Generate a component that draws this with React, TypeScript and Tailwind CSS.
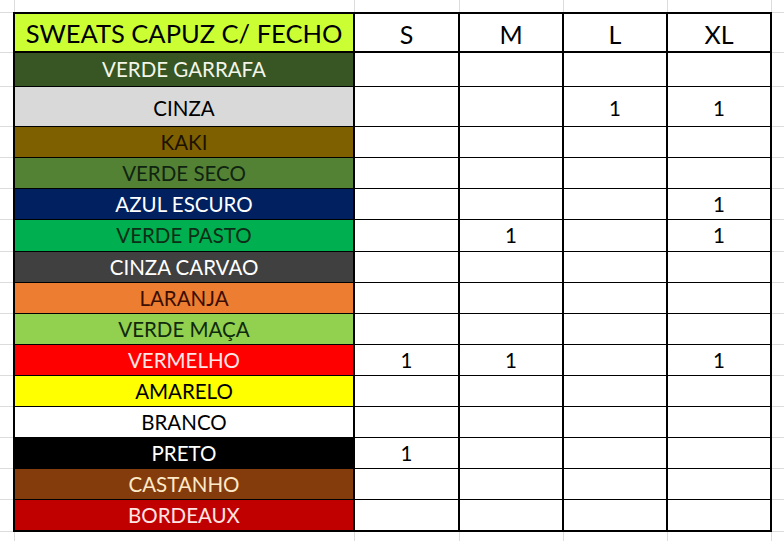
type Row = {
  name: string;
  bg: string;
  fg: string;
  h: string;
  pad?: string;
  last?: boolean;
  sizes: string[];
};

const rows: Row[] = [
  { name: "VERDE GARRAFA", bg: "bg-[#375623]", fg: "text-[#f3f5e8]", h: "h-[34px]", sizes: ["", "", "", ""] },
  { name: "CINZA", bg: "bg-[#d9d9d9]", fg: "text-black", h: "h-[40px]", pad: "pt-[4px]", sizes: ["", "", "1", "1"] },
  { name: "KAKI", bg: "bg-[#7f6000]", fg: "text-[#1c1200]", h: "h-[31px]", sizes: ["", "", "", ""] },
  { name: "VERDE SECO", bg: "bg-[#548235]", fg: "text-[#0f2410]", h: "h-[31px]", sizes: ["", "", "", ""] },
  { name: "AZUL ESCURO", bg: "bg-[#002060]", fg: "text-white", h: "h-[31px]", sizes: ["", "", "", "1"] },
  { name: "VERDE PASTO", bg: "bg-[#00b050]", fg: "text-[#0c2e16]", h: "h-[32px]", sizes: ["", "1", "", "1"] },
  { name: "CINZA CARVAO", bg: "bg-[#404040]", fg: "text-white", h: "h-[31px]", sizes: ["", "", "", ""] },
  { name: "LARANJA", bg: "bg-[#ed7d31]", fg: "text-[#3b0e02]", h: "h-[31px]", sizes: ["", "", "", ""] },
  { name: "VERDE MAÇA", bg: "bg-[#92d050]", fg: "text-[#0f2a0d]", h: "h-[31px]", sizes: ["", "", "", ""] },
  { name: "VERMELHO", bg: "bg-[#ff0000]", fg: "text-[#ffe6e6]", h: "h-[31px]", sizes: ["1", "1", "", "1"] },
  { name: "AMARELO", bg: "bg-[#ffff00]", fg: "text-black", h: "h-[31px]", sizes: ["", "", "", ""] },
  { name: "BRANCO", bg: "bg-white", fg: "text-black", h: "h-[31px]", sizes: ["", "", "", ""] },
  { name: "PRETO", bg: "bg-black", fg: "text-white", h: "h-[31px]", sizes: ["1", "", "", ""] },
  { name: "CASTANHO", bg: "bg-[#843c0c]", fg: "text-[#fde9c8]", h: "h-[31px]", sizes: ["", "", "", ""] },
  { name: "BORDEAUX", bg: "bg-[#c00000]", fg: "text-[#ffe4e4]", h: "h-[32px]", last: true, sizes: ["", "", "", ""] },
];

const sizeWidths = ["w-[105px]", "w-[104px]", "w-[104px]", "w-[104px]"];

// faint excel gridlines above / below the table
const GridStrip = ({ h }: { h: string }) => (
  <div className={`flex ${h}`}>
    <div className="w-[15px] border-r border-[#dcdcdc]" />
    <div className="w-[340px] border-r border-[#dcdcdc]" />
    <div className="w-[105px] border-r border-[#dcdcdc]" />
    <div className="w-[104px] border-r border-[#dcdcdc]" />
    <div className="w-[104px] border-r border-[#dcdcdc]" />
    <div className="w-[104px] border-r border-[#dcdcdc]" />
    <div className="flex-1" />
  </div>
);

const BodyRow = ({ row }: { row: Row }) => {
  const bottom = row.last ? "border-b-2" : "border-b";
  return (
    <div className={`flex ${row.h}`}>
      <div className="w-[13px] border-b border-[#dcdcdc]" />
      <div
        className={`w-[342px] flex items-center justify-center border-l-2 border-r-2 border-black ${bottom} ${row.bg} ${row.fg} ${row.pad ?? ""} text-[20.5px] leading-none`}
      >
        {row.name}
      </div>
      {row.sizes.map((v, i) => (
        <div
          key={i}
          className={`${sizeWidths[i]} flex items-center justify-center border-r-2 border-black ${bottom} ${row.pad ?? ""} text-[20.5px] leading-none text-black`}
        >
          {v}
        </div>
      ))}
      <div className="flex-1 border-b border-[#dcdcdc]" />
    </div>
  );
};

export default function App() {
  return (
    <div className="w-[784px] h-[541px] overflow-hidden bg-white font-[Lato,sans-serif] flex flex-col">
      <GridStrip h="h-[12px]" />

      {/* Header */}
      <div className="flex h-[41px]">
        <div className="w-[13px] border-y border-[#dcdcdc]" />
        <div className="w-[342px] flex items-center justify-center pt-[3px] border-2 border-black bg-[#ccff33] text-black text-[25.5px] leading-none">
          SWEATS CAPUZ C/ FECHO
        </div>
        {["S", "M", "L", "XL"].map((s, i) => (
          <div
            key={s}
            className={`${sizeWidths[i]} flex items-center justify-center pt-[3px] border-y-2 border-r-2 border-black text-black text-[25px] leading-none`}
          >
            {s}
          </div>
        ))}
        <div className="flex-1 border-y border-[#dcdcdc]" />
      </div>

      {rows.map((r) => (
        <BodyRow key={r.name} row={r} />
      ))}

      <GridStrip h="flex-1" />
    </div>
  );
}
